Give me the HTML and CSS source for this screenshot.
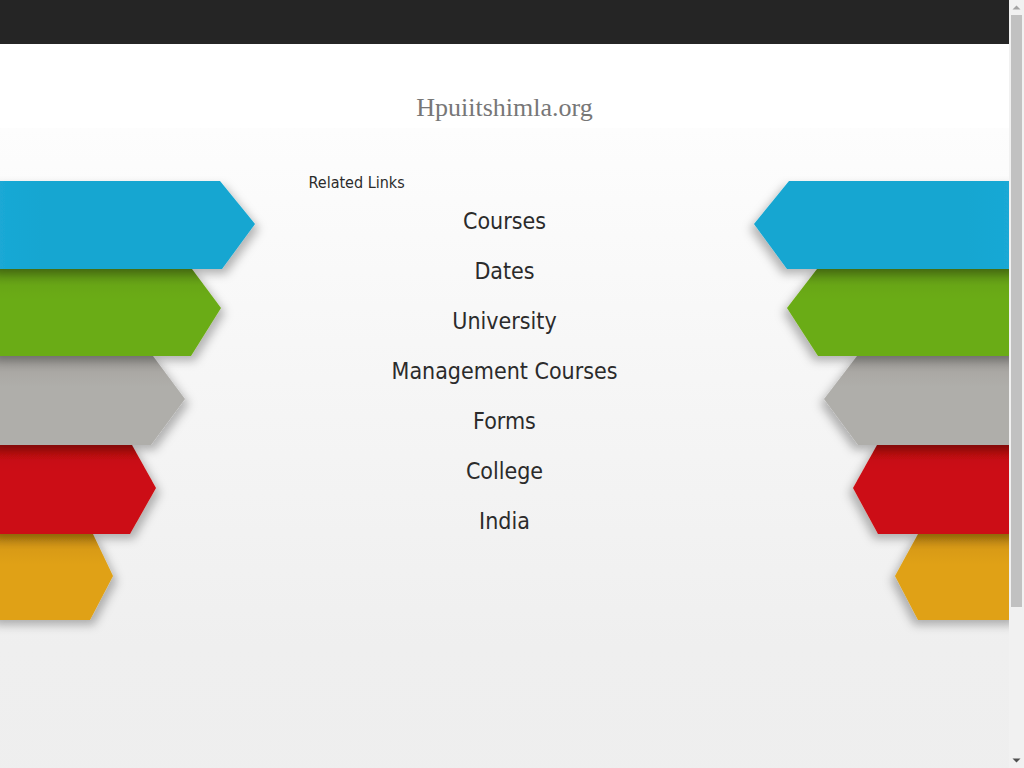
FILE: index.html
```html
<!DOCTYPE html>
<html>
<head>
<meta charset="utf-8">
<title>Hpuiitshimla.org</title>
<link rel="stylesheet" href="styles.css">
</head>
<body>
<div class="page">
  <div class="topbar"></div>
  <header class="site-head">
    <h1 class="site-title">Hpuiitshimla.org</h1>
  </header>
  <main class="stage">
    <div class="side side-left">
      <svg class="ribbons" width="270" height="470" viewBox="0 0 270 470">
        <defs>
          <filter id="shL" x="-20%" y="-20%" width="150%" height="160%">
            <feDropShadow dx="4" dy="5" stdDeviation="5" flood-color="#000" flood-opacity="0.28"/>
          </filter>
          <linearGradient id="lo" x1="0" y1="0" x2="0" y2="1"><stop offset="0" stop-color="#bf8610"/><stop offset="0.18" stop-color="#d99b14"/><stop offset="0.35" stop-color="#e0a112"/></linearGradient>
          <linearGradient id="lr" x1="0" y1="0" x2="0" y2="1"><stop offset="0" stop-color="#ad0f10"/><stop offset="0.18" stop-color="#c81112"/><stop offset="0.3" stop-color="#cc1112"/></linearGradient>
          <linearGradient id="lg" x1="0" y1="0" x2="0" y2="1"><stop offset="0" stop-color="#9b9995"/><stop offset="0.2" stop-color="#aba9a5"/><stop offset="0.35" stop-color="#afaeaa"/></linearGradient>
          <linearGradient id="lgr" x1="0" y1="0" x2="0" y2="1"><stop offset="0" stop-color="#5c8f12"/><stop offset="0.2" stop-color="#68a712"/><stop offset="0.35" stop-color="#6bac12"/></linearGradient>
          <linearGradient id="lb" x1="0" y1="0" x2="1" y2="0"><stop offset="0" stop-color="#1ca9d6"/><stop offset="0.2" stop-color="#12a6d1"/><stop offset="1" stop-color="#12a6d1"/></linearGradient>
        </defs>
        <polygon filter="url(#shL)" fill="url(#lo)" points="-10,364 93,364 113,406 90,450 -10,450"/>
        <polygon filter="url(#shL)" fill="url(#lr)" points="-10,275 132,275 156,318 130,364 -10,364"/>
        <polygon filter="url(#shL)" fill="url(#lg)" points="-10,186 153,186 185,229 151,275 -10,275"/>
        <polygon filter="url(#shL)" fill="url(#lgr)" points="-10,99 192,99 221,138 191,186 -10,186"/>
        <polygon filter="url(#shL)" fill="url(#lb)" points="-10,11 220,11 255,54 222,99 -10,99"/>
      </svg>
    </div>
    <section class="links">
      <h2 class="links-head">Related Links</h2>
      <ul class="link-list">
        <li><a href="#">Courses</a></li>
        <li><a href="#">Dates</a></li>
        <li><a href="#">University</a></li>
        <li><a href="#">Management Courses</a></li>
        <li><a href="#">Forms</a></li>
        <li><a href="#">College</a></li>
        <li><a href="#">India</a></li>
      </ul>
    </section>
    <div class="side side-right">
      <svg class="ribbons" width="270" height="470" viewBox="0 0 270 470">
        <defs>
          <filter id="shR" x="-30%" y="-20%" width="150%" height="160%">
            <feDropShadow dx="-4" dy="5" stdDeviation="5" flood-color="#000" flood-opacity="0.28"/>
          </filter>
          <linearGradient id="ro" x1="0" y1="0" x2="0" y2="1"><stop offset="0" stop-color="#bf8610"/><stop offset="0.18" stop-color="#d99b14"/><stop offset="0.35" stop-color="#e0a112"/></linearGradient>
          <linearGradient id="rr" x1="0" y1="0" x2="0" y2="1"><stop offset="0" stop-color="#ad0f10"/><stop offset="0.18" stop-color="#c81112"/><stop offset="0.3" stop-color="#cc1112"/></linearGradient>
          <linearGradient id="rg" x1="0" y1="0" x2="0" y2="1"><stop offset="0" stop-color="#9b9995"/><stop offset="0.2" stop-color="#aba9a5"/><stop offset="0.35" stop-color="#afaeaa"/></linearGradient>
          <linearGradient id="rgr" x1="0" y1="0" x2="0" y2="1"><stop offset="0" stop-color="#5c8f12"/><stop offset="0.2" stop-color="#68a712"/><stop offset="0.35" stop-color="#6bac12"/></linearGradient>
          <linearGradient id="rb" x1="0" y1="0" x2="1" y2="0"><stop offset="0" stop-color="#12a6d1"/><stop offset="0.8" stop-color="#12a6d1"/><stop offset="1" stop-color="#1ca9d6"/></linearGradient>
        </defs>
        <polygon filter="url(#shR)" fill="url(#ro)" points="280,364 179,364 156,406 179,450 280,450"/>
        <polygon filter="url(#shR)" fill="url(#rr)" points="280,275 138,275 114,318 139,364 280,364"/>
        <polygon filter="url(#shR)" fill="url(#rg)" points="280,186 118,186 85,229 119,275 280,275"/>
        <polygon filter="url(#shR)" fill="url(#rgr)" points="280,99 78,99 48,138 79,186 280,186"/>
        <polygon filter="url(#shR)" fill="url(#rb)" points="280,11 50,11 15,54 48,99 280,99"/>
      </svg>
    </div>
  </main>
</div>
<div class="scrollbar" aria-hidden="true">
  <svg class="sb-arrow" width="15" height="15" viewBox="0 0 15 15"><polygon points="3.5,9.5 7.5,5.5 11.5,9.5" fill="#a3a3a3"/></svg>
  <div class="sb-track"><div class="sb-thumb"></div></div>
  <svg class="sb-arrow" width="15" height="15" viewBox="0 0 15 15"><polygon points="3.5,5.5 7.5,9.5 11.5,5.5" fill="#505050"/></svg>
</div>
</body>
</html>
```

FILE: styles.css
```css
html, body {
  margin: 0;
  padding: 0;
}
body {
  background: #eeeeee;
  font-family: "DejaVu Sans Condensed", "DejaVu Sans", sans-serif;
  color: #2b2b2b;
}
.page {
  margin-right: 15px;
  min-height: 957px;
  overflow: hidden;
}
.topbar {
  height: 44px;
  background: #252525;
}
.site-head {
  background: #ffffff;
  height: 84px;
  display: flex;
  justify-content: center;
}
.site-title {
  margin: -6px 0 0;
  padding-top: 55px;
  font-family: "Liberation Serif", serif;
  font-weight: normal;
  font-size: 26px;
  line-height: 30px;
  color: #777777;
  height: 30px;
}
.stage {
  display: grid;
  grid-template-columns: 1fr 392px 1fr;
  padding-top: 42px;
  background: linear-gradient(#fdfdfd 0px, #f6f6f6 250px, #efefef 520px, #eeeeee 700px);
  min-height: 600px;
}
.side {
  display: flex;
}
.side-right {
  justify-content: flex-end;
}
.ribbons {
  display: block;
  overflow: visible;
}
.links-head {
  margin: 0 0 12px;
  font-size: 16px;
  font-weight: normal;
  line-height: 26px;
  color: #2b2b2b;
}
.link-list {
  list-style: none;
  margin: 0;
  padding: 0;
  text-align: center;
}
.link-list li {
  height: 50px;
  line-height: 26px;
}
.link-list a {
  font-size: 23px;
  color: #2b2b2b;
  text-decoration: none;
}
.scrollbar {
  position: fixed;
  top: 0;
  right: 0;
  bottom: 0;
  width: 15px;
  background: #f1f1f1;
  display: flex;
  flex-direction: column;
}
.sb-arrow {
  display: block;
  flex: none;
}
.sb-track {
  flex: 1;
  display: flex;
  flex-direction: column;
}
.sb-thumb {
  margin: 0 2px;
  height: 592px;
  background: #c1c1c1;
}
```
